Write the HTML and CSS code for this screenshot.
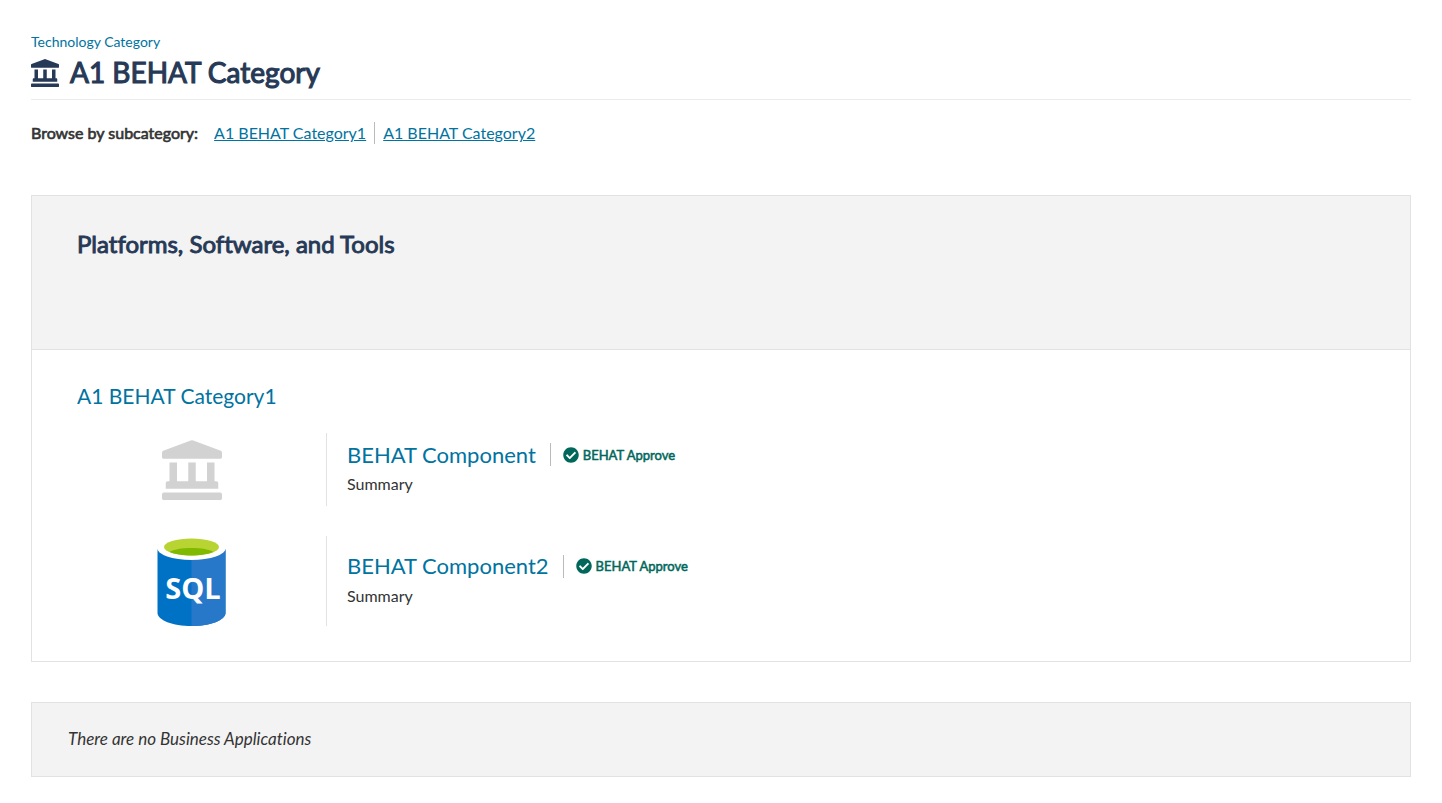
FILE: index.html
```html
<!DOCTYPE html>
<html lang="en">
<head>
<meta charset="utf-8">
<meta name="viewport" content="width=device-width, initial-scale=1">
<title>A1 BEHAT Category</title>
<link rel="stylesheet" href="styles.css">
</head>
<body>
<svg class="symbols" aria-hidden="true">
  <symbol id="landmark" viewBox="0 0 512 512">
    <path d="M501.600 91.600 267 3.500a32 32 0 0 0-22 0L10.400 91.600A16 16 0 0 0 0 106.600V144a16 16 0 0 0 16 16h480a16 16 0 0 0 16-16v-37.400a16 16 0 0 0-10.400-15zM64 192v160H48a16 16 0 0 0-16 16v48h448v-48a16 16 0 0 0-16-16h-16V192h-64v160h-96V192h-64v160h-96V192H64zM496 448H16a16 16 0 0 0-16 16v32a16 16 0 0 0 16 16h480a16 16 0 0 0 16-16v-32a16 16 0 0 0-16-16z"/>
  </symbol>
  <symbol id="check-circle" viewBox="0 0 512 512">
    <path d="M504 256c0 137-111 248-248 248S8 393 8 256 119 8 256 8s248 111 248 248zM227.300 387.300l184-184c6.200-6.200 6.200-16.400 0-22.600l-22.600-22.600c-6.200-6.200-16.400-6.200-22.600 0L216 308.100l-70.100-70.100c-6.200-6.200-16.400-6.200-22.600 0l-22.600 22.600c-6.200 6.200-6.200 16.400 0 22.600l104 104c6.200 6.200 16.400 6.200 22.600.1z"/>
  </symbol>
</svg>
<main class="page">
  <header class="page-header">
    <a class="eyebrow" href="#">Technology Category</a>
    <h1 class="page-title"><svg class="title-icon" aria-hidden="true"><use href="#landmark"/></svg>A1 BEHAT Category</h1>
  </header>
  <nav class="subnav" aria-label="Subcategories">
    <span class="subnav-label">Browse by subcategory:</span>
    <a class="subnav-link" href="#">A1 BEHAT Category1</a>
    <a class="subnav-link" href="#">A1 BEHAT Category2</a>
  </nav>
  <section class="panel">
    <div class="panel-header"><h2 class="panel-title">Platforms, Software, and Tools</h2></div>
    <div class="panel-body">
      <h3 class="group-title"><a href="#">A1 BEHAT Category1</a></h3>
      <article class="component">
        <div class="component-media"><svg class="placeholder-icon" aria-hidden="true"><use href="#landmark"/></svg></div>
        <div class="component-info">
          <div class="component-heading">
            <h4 class="component-name"><a href="#">BEHAT Component</a></h4>
            <span class="status"><svg class="status-icon" aria-hidden="true"><use href="#check-circle"/></svg><span class="status-text">BEHAT Approve</span></span>
          </div>
          <p class="summary">Summary</p>
        </div>
      </article>
      <article class="component">
        <div class="component-media">
          <svg class="sql-logo" viewBox="0 0 70 90" role="img" aria-label="SQL">
            <path fill="#0072c6" d="M.5 13v64c0 7 15 13 34 13s34-6 34-13V13z"/>
            <path fill="#2878ca" d="M34.500 13v77c19 0 34-6 34-13V13z"/>
            <ellipse cx="34.500" cy="12" rx="34.500" ry="12" fill="#fff"/>
            <ellipse cx="34.500" cy="11" rx="27.500" ry="8.500" fill="#b8d432"/>
            <path fill="#7fba00" d="M12.500 16c4-2.500 12-4 22-4s18 1.500 22 4c-5 2-13 3.500-22 3.500s-17-1.500-22-3.500z"/>
            <text class="sql-text" x="36" y="63" text-anchor="middle">SQL</text>
          </svg>
        </div>
        <div class="component-info">
          <div class="component-heading">
            <h4 class="component-name"><a href="#">BEHAT Component2</a></h4>
            <span class="status"><svg class="status-icon" aria-hidden="true"><use href="#check-circle"/></svg><span class="status-text">BEHAT Approve</span></span>
          </div>
          <p class="summary">Summary</p>
        </div>
      </article>
    </div>
  </section>
  <section class="empty-panel"><em>There are no Business Applications</em></section>
</main>
</body>
</html>
```
FILE: styles.css
```css
* { box-sizing: border-box; }
body {
  margin: 0;
  background: #fff;
  color: #333;
  font-family: Lato, "Open Sans", sans-serif;
  font-size: 16px;
  line-height: 24px;
  font-variant-ligatures: none;
}
h1, h2, h3, h4, p { margin: 0; font-weight: 400; }
a { color: #0073a0; text-decoration: none; }
.symbols { display: none; }
.page { padding: 30px 31px 26px; }
.page-header { border-bottom: 1px solid #ebebeb; padding-bottom: 8px; }
.eyebrow { display: block; font-size: 14px; line-height: 24px; }
.page-title, .panel-title, .subnav-label, .status-text {
  -webkit-text-stroke: 0.04em currentColor;
}
.page-title {
  display: flex;
  align-items: center;
  gap: 11px;
  color: #263956;
  font-size: 28px;
  line-height: 37px;
}
.title-icon { width: 28px; height: 28px; fill: #263956; }
.subnav { display: flex; align-items: center; margin-top: 22px; line-height: 22px; }
.subnav-label { margin-right: 16px; }
.subnav-link { text-decoration: underline; }
.subnav-link + .subnav-link { margin-left: 8px; padding-left: 8px; border-left: 1px solid #bbb; }
.panel { margin-top: 51px; border: 1px solid #e2e2e2; }
.panel-header {
  min-height: 154px;
  padding: 32px 45px;
  background: #f3f3f3;
  border-bottom: 1px solid #e2e2e2;
}
.panel-title { color: #263956; font-size: 24px; line-height: 32px; }
.panel-body { padding: 32px 45px 35px; }
.group-title { font-size: 21px; line-height: 28px; margin-bottom: 23px; }
.component { display: grid; grid-template-columns: 249px 1fr; }
.component + .component { margin-top: 30px; }
.component-media {
  display: flex;
  align-items: center;
  justify-content: center;
  padding-right: 19px;
  min-height: 73px;
}
.placeholder-icon { width: 60px; height: 60px; fill: #d2d2d2; }
.sql-logo { width: 70px; height: 90px; }
.sql-text { font: 700 29px "Open Sans", sans-serif; fill: #fff; }
.component-info {
  display: flex;
  flex-direction: column;
  justify-content: center;
  gap: 6px;
  padding-left: 20px;
  border-left: 1px solid #e2e2e2;
}
.component-heading { display: flex; align-items: center; }
.component-name { font-size: 22px; line-height: 22px; }
.status {
  display: flex;
  align-items: center;
  gap: 4px;
  height: 23px;
  margin-left: 14px;
  padding-left: 12px;
  border-left: 1px solid #bbb;
  color: #00675a;
  font-size: 13px;
}
.status-icon { width: 16px; height: 16px; fill: #00675a; }
.summary { line-height: 24px; }
.empty-panel {
  margin-top: 40px;
  padding: 24px 36px 25px;
  background: #f3f3f3;
  border: 1px solid #e2e2e2;
  font-size: 17px;
}
```
